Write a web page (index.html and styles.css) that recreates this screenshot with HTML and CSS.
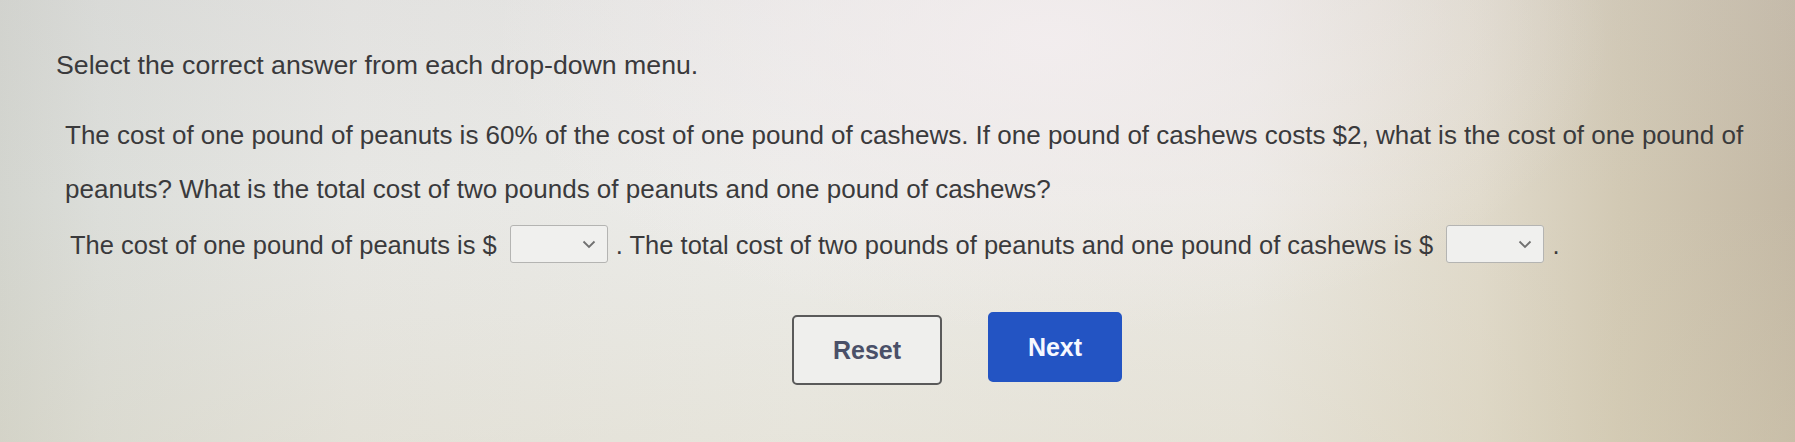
FILE: index.html
```html
<!DOCTYPE html>
<html lang="en">
<head>
<meta charset="utf-8">
<title>Select the correct answer</title>
<link rel="stylesheet" href="styles.css">
</head>
<body>
<main class="question">
  <p class="prompt">Select the correct answer from each drop-down menu.</p>
  <div class="stem">
    <p class="text">The cost of one pound of peanuts is 60% of the cost of one pound of cashews. If one pound of cashews costs $2, what is the cost of one pound of peanuts? What is the total cost of two pounds of peanuts and one pound of cashews?</p>
    <p class="answer">The cost of one pound of peanuts is $ <span class="select"><span class="chev"><svg viewBox="0 0 14 9" width="14" height="9"><path d="M1.5 1.5 L7 7 L12.5 1.5" fill="none" stroke="#707070" stroke-width="1.8"/></svg></span></span>. The total cost of two pounds of peanuts and one pound of cashews is $ <span class="select"><span class="chev"><svg viewBox="0 0 14 9" width="14" height="9"><path d="M1.5 1.5 L7 7 L12.5 1.5" fill="none" stroke="#707070" stroke-width="1.8"/></svg></span></span>.</p>
  </div>
  <div class="actions">
    <button class="btn btn-reset" type="button">Reset</button>
    <button class="btn btn-next" type="button">Next</button>
  </div>
</main>
</body>
</html>
```
FILE: styles.css
```css
html, body {
  margin: 0;
  height: 100%;
}
body {
  font-family: "Liberation Sans", Arial, sans-serif;
  color: #3a3a3c;
  background:
    radial-gradient(ellipse 800px 420px at 1050px 40px, rgba(244, 238, 240, 0.85), rgba(244, 238, 240, 0) 70%),
    linear-gradient(180deg, rgba(200, 196, 200, 0.15) 0px, rgba(220, 214, 190, 0.0) 200px, rgba(214, 206, 178, 0.25) 442px),
    linear-gradient(90deg, #d3d5cf 0px, #dcdeda 100px, #e7e7e4 350px, #ecece9 800px, #eae8e2 1250px, #e0dacb 1480px, #d2c9b4 1620px, #c4b9a5 1795px);
  overflow: hidden;
}
.question {
  padding: 48px 0 0 56px;
  width: 1710px;
}
.prompt {
  margin: 0;
  font-size: 26.7px;
  line-height: 34px;
}
.stem {
  margin-top: 26px;
  padding-left: 9px;
}
.text {
  margin: 0;
  font-size: 26px;
  line-height: 54px;
}
.answer {
  margin: 2px 0 0 5px;
  font-size: 25.5px;
  line-height: 54px;
}
.select {
  display: inline-flex;
  justify-content: flex-end;
  align-items: center;
  box-sizing: border-box;
  width: 98px;
  height: 38px;
  vertical-align: middle;
  margin: -6px 8px 0 6px;
  padding-right: 11px;
  border: 1px solid #b4b4b2;
  border-radius: 3px;
  background: #f0f0ee;
}
.chev {
  display: flex;
}
.actions {
  display: flex;
  gap: 46px;
  margin: 43px 0 0 736px;
  align-items: center;
}
.btn {
  font-family: "Liberation Sans", Arial, sans-serif;
  font-weight: bold;
  font-size: 25px;
  height: 70px;
  border-radius: 5px;
  cursor: pointer;
}
.btn-reset {
  width: 150px;
  background: #efefed;
  color: #4a5068;
  border: 2px solid #5a5a5a;
}
.btn-next {
  width: 134px;
  background: #2354c3;
  color: #f6f8ff;
  border: 2px solid #2354c3;
  margin-top: -6px;
}
```
